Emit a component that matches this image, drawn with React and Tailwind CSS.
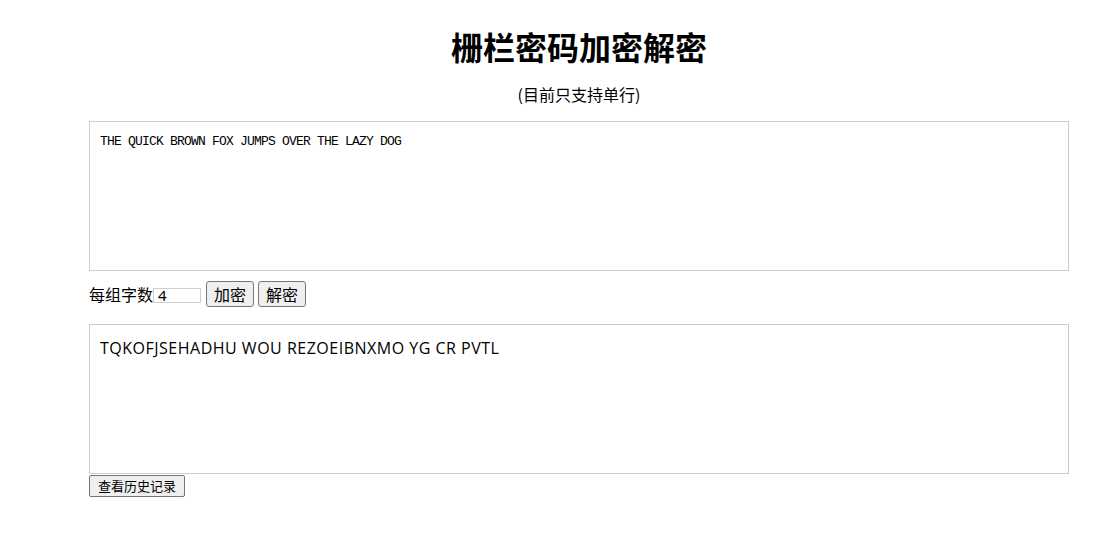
export default function App() {
  const cjk = { fontFamily: '"Noto Sans CJK SC", "Noto Sans", sans-serif' };
  return (
    <div className="min-h-[536px] bg-white text-black" style={cjk}>
      <div className="ml-[89px] w-[980px] flex flex-col">
        <h1 className="mt-[26px] h-[40px] leading-[40px] text-center text-[32px] font-bold">栅栏密码加密解密</h1>
        <p className="mt-[16px] h-[24px] leading-[24px] text-center text-[16px]">(目前只支持单行)</p>
        <textarea
          className="mt-[15px] block w-[980px] h-[150px] border border-[#cccccc] px-[10px] py-[12px] text-[13px] leading-[16px] tracking-[-0.8px] resize-none outline-none"
          style={{ fontFamily: '"Liberation Mono", monospace' }}
          defaultValue="THE QUICK BROWN FOX JUMPS OVER THE LAZY DOG"
        />
        <div className="mt-[10px] flex items-center h-[26px]">
          <span className="text-[16px] leading-[20px]">每组字数</span>
          <input
            className="mt-[2px] w-[48px] h-[15px] border border-[#d0d0d0] px-[4px] text-[15px] leading-[15px] outline-none"
            style={{ fontFamily: '"Noto Sans", sans-serif' }}
            defaultValue="4"
          />
          <button className="ml-[5px] h-[26px] w-[48px] border border-[#767676] rounded-[3px] bg-[#efefef] text-[16px] leading-[20px]">加密</button>
          <button className="ml-[4px] h-[26px] w-[48px] border border-[#767676] rounded-[3px] bg-[#efefef] text-[16px] leading-[20px]">解密</button>
        </div>
        <textarea
          className="mt-[17px] block w-[980px] h-[150px] border border-[#cccccc] px-[10px] py-[12px] text-[16px] leading-[22px] tracking-[0.5px] resize-none outline-none"
          style={{ fontFamily: '"Open Sans", "Noto Sans", sans-serif' }}
          defaultValue="TQKOFJSEHADHU WOU REZOEIBNXMO YG CR PVTL"
        />
        <div className="mt-[1px] flex">
          <button className="h-[22px] w-[96px] border border-[#767676] rounded-[2px] bg-[#efefef] text-[13px] leading-[18px]">查看历史记录</button>
        </div>
      </div>
    </div>
  );
}
